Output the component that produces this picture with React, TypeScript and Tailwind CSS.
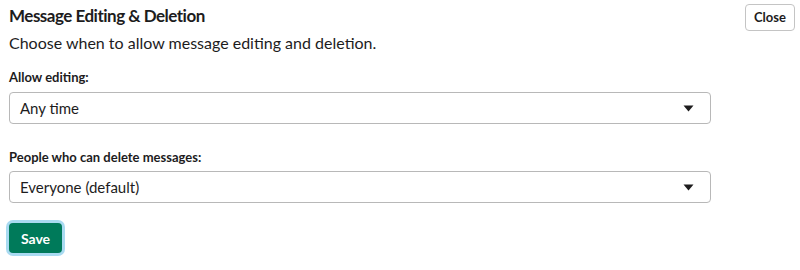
import React from "react";

function Caret() {
  return (
    <svg width="11" height="7" viewBox="0 0 11 7" className="shrink-0">
      <path d="M0.5 0.5 L10.5 0.5 L5.5 6.5 Z" fill="#1d1c1d" />
    </svg>
  );
}

function Select({ value }: { value: string }) {
  return (
    <div className="w-[702px] h-[32px] border border-[#b8b8b8] rounded-[4px] flex items-center justify-between pl-[10px] pr-[16px] bg-white">
      <span className="text-[15px] text-[#1d1c1d]">{value}</span>
      <Caret />
    </div>
  );
}

export default function App() {
  return (
    <div
      className="w-[800px] h-[270px] bg-white relative"
      style={{ fontFamily: "Lato, 'Noto Sans', sans-serif" }}
    >
      <button className="absolute left-[745px] top-[4px] w-[50px] h-[27px] border border-[#c4c4c4] rounded-[4px] text-[13px] font-bold text-[#1d1c1d] bg-white flex items-center justify-center">
        Close
      </button>
      <div className="flex flex-col pl-[9px] pt-[4px]">
        <h1 className="text-[17px] font-bold tracking-[-0.5px] text-[#1d1c1d] leading-[24px]">
          Message Editing &amp; Deletion
        </h1>
        <p className="text-[16px] text-[#1d1c1d] leading-[22px] mt-[4px]">
          Choose when to allow message editing and deletion.
        </p>
        <label className="text-[13px] font-bold text-[#1d1c1d] leading-[18px] mt-[14px]">
          Allow editing:
        </label>
        <div className="mt-[6px]">
          <Select value="Any time" />
        </div>
        <label className="text-[13px] font-bold text-[#1d1c1d] leading-[18px] mt-[24px]">
          People who can delete messages:
        </label>
        <div className="mt-[5px]">
          <Select value="Everyone (default)" />
        </div>
        <div className="mt-[17px] ml-[-3px]">
          <div className="inline-flex rounded-[7px] p-[3px] bg-[#a9daf1]">
            <button className="w-[53px] h-[30px] rounded-[4px] bg-[#007a5a] text-white text-[14px] font-bold flex items-center justify-center">
              Save
            </button>
          </div>
        </div>
      </div>
    </div>
  );
}
